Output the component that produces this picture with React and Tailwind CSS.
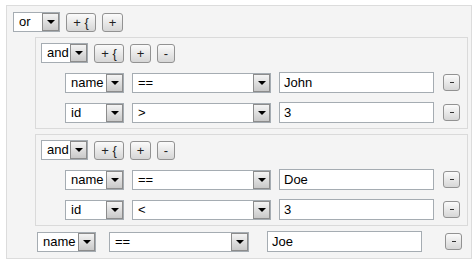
import React from 'react';

const Select = ({ value, width }) => (
  <div
    className="relative h-[20px] bg-white border border-[#a5acb2] text-[13px] leading-[18px] pl-[5px] text-black shrink-0"
    style={{ width }}
  >
    {value}
    <div className="absolute right-0 top-0 bottom-0 w-[17px] border border-[#8c8c8c] bg-gradient-to-b from-[#f4f4f4] to-[#c9c9c9] flex items-center justify-center">
      <div className="w-0 h-0 border-l-[4px] border-r-[4px] border-t-[4px] border-l-transparent border-r-transparent border-t-black" />
    </div>
  </div>
);

const Btn = ({ children, w = 'w-[21px]' }) => (
  <div
    className={`${w} h-[19px] shrink-0 rounded-[3px] border border-[#929292] bg-gradient-to-b from-[#fbfbfb] to-[#d6d6d6] flex items-center justify-center text-[13px] leading-none text-[#222]`}
  >
    {children}
  </div>
);

const MinusBtn = () => (
  <div className="w-[17px] h-[17px] shrink-0 rounded-[3px] border border-[#929292] bg-gradient-to-b from-[#fbfbfb] to-[#d6d6d6] flex items-center justify-center">
    <div className="w-[4px] h-[1px] bg-[#333]" />
  </div>
);

const TextInput = ({ value, width }) => (
  <div
    className="h-[21px] bg-white border border-[#a5acb2] text-[13px] leading-[19px] pl-[4px] text-black shrink-0"
    style={{ width }}
  >
    {value}
  </div>
);

const Rule = ({ field, op, value }) => (
  <div className="flex items-center h-[21px] ml-[24px]">
    <Select value={field} width={59} />
    <div className="ml-[8px]">
      <Select value={op} width={139} />
    </div>
    <div className="ml-[8px]">
      <TextInput value={value} width={155} />
    </div>
    <div className="ml-[9px]">
      <MinusBtn />
    </div>
  </div>
);

const Group = ({ rules }) => (
  <div className="w-[433px] ml-[22px] border border-[#dadada] bg-[#f4f4f4] pt-[5px] pb-[5px] pl-[5px] flex flex-col gap-[9px]">
    <div className="flex items-center gap-[6px] h-[20px]">
      <Select value="and" width={47} />
      <Btn w="w-[30px]">+ {'{'}</Btn>
      <Btn>+</Btn>
      <Btn w="w-[18px]">-</Btn>
    </div>
    {rules.map((r, i) => (
      <Rule key={i} {...r} />
    ))}
  </div>
);

export default function App() {
  return (
    <div className="w-[475px] h-[262px] bg-white pt-[5px] pl-[6px]" style={{ fontFamily: '"Liberation Sans", Arial, sans-serif' }}>
      <div className="w-[466px] border border-[#dcdcdc] bg-[#f4f4f4] pt-[6px] pb-[6px] pl-[6px] flex flex-col gap-[5px]">
        <div className="flex items-center gap-[6px] h-[20px]">
          <Select value="or" width={47} />
          <Btn w="w-[30px]">+ {'{'}</Btn>
          <Btn>+</Btn>
        </div>
        <Group
          rules={[
            { field: 'name', op: '==', value: 'John' },
            { field: 'id', op: '>', value: '3' },
          ]}
        />
        <Group
          rules={[
            { field: 'name', op: '==', value: 'Doe' },
            { field: 'id', op: '<', value: '3' },
          ]}
        />
        <div className="flex items-center h-[21px] ml-[24px]">
          <Select value="name" width={59} />
          <div className="ml-[13px]">
            <Select value="==" width={140} />
          </div>
          <div className="ml-[18px]">
            <TextInput value="Joe" width={155} />
          </div>
          <div className="ml-[23px]">
            <MinusBtn />
          </div>
        </div>
      </div>
    </div>
  );
}
